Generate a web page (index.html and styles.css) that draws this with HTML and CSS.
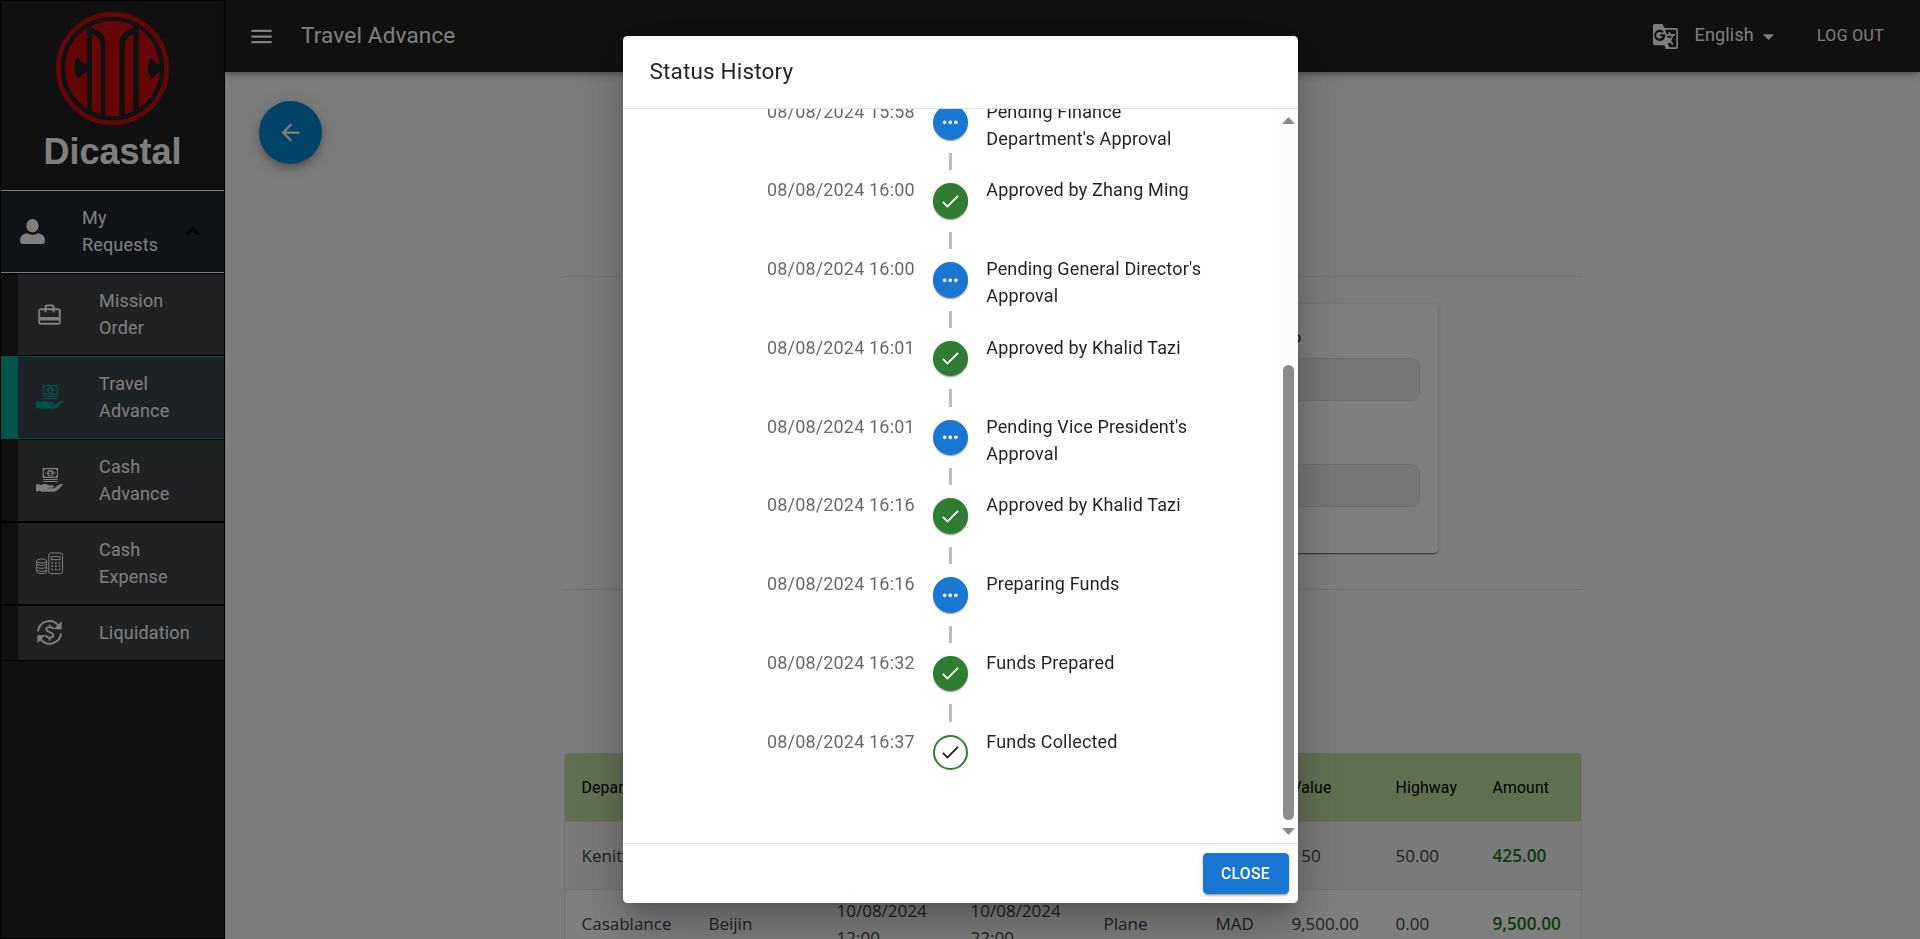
FILE: index.html
```html
<!DOCTYPE html>
<html lang="en">
<head>
<meta charset="utf-8">
<title>Travel Advance</title>
<link rel="stylesheet" href="styles.css">
</head>
<body>
<svg class="defs" width="0" height="0">
  <symbol id="check" viewBox="0 0 24 24"><path d="M9 16.17 4.83 12l-1.42 1.41L9 19 21 7l-1.41-1.41z"/></symbol>
  <symbol id="dots" viewBox="0 0 24 24"><path d="M6 10c-1.1 0-2 .9-2 2s.9 2 2 2 2-.9 2-2-.9-2-2-2m12 0c-1.1 0-2 .9-2 2s.9 2 2 2 2-.9 2-2-.9-2-2-2m-6 0c-1.1 0-2 .9-2 2s.9 2 2 2 2-.9 2-2-.9-2-2-2"/></symbol>
  <symbol id="cash-hand" viewBox="0 0 81 72">
    <path fill-rule="evenodd" d="M20 0h46v30H20zM26 4a5 5 0 0 1-3 4v14a5 5 0 0 1 3 4h34a5 5 0 0 1 3-4V8a5 5 0 0 1-3-4z"/>
    <path fill-rule="evenodd" d="M43 5a10 10 0 1 0 .1 0zM42 10h3v3h3v3h-6v2h6v3h-4v2h-3v-2h-3v-3h6v-2h-6v-4h4z"/>
    <circle cx="29" cy="15" r="2"/><circle cx="57" cy="15" r="2"/>
    <path d="M22 33h43v3H22zM22 39h43v3H22z"/>
    <path d="M0 49h10l4 3c8-6 18-4 24 0h12c5 0 5 6 0 7H35v2h17c5-1 8-5 13-8 6-4 11-5 16-5-6 10-17 22-29 23H16l-5-3-2 2H0z"/>
  </symbol>
</svg>

<div class="app">
  <aside class="sidebar">
    <div class="brand">
      <svg class="brand-logo" viewBox="168 36 340 340">
        <circle cx="338" cy="206" r="163" fill="none" stroke="#c90c10" stroke-width="14"/>
        <g fill="#c90c10">
          <path d="M262 84A144 144 0 0 0 262 327V216Q245 222 236 237Q223 229 223 205Q223 181 233 173Q244 191 262 195Z"/>
          <path d="M417 85V325A144 144 0 0 0 481 216Q466 222 458 237Q444 229 444 205Q444 181 454 173Q463 191 480 195A144 144 0 0 0 417 85Z"/>
          <path d="M276 78Q300 63 338 62Q376 63 400 78V85Q359 93 359 136V348Q338 351 317 348V136Q317 94 276 86Z"/>
          <path d="M276 102Q303 112 303 140V345L276 334Z"/>
          <path d="M401 102Q375 112 375 140V345L401 334Z"/>
        </g>
      </svg>
      <div class="brand-name">Dicastal</div>
    </div>
    <div class="nav-group">
      <svg class="nav-user" viewBox="0 0 75 75"><ellipse cx="37.500" cy="20" rx="18.500" ry="20"/><path d="M0 66C0 52 8 45 22 43Q37 52 53 43C67 45 75 52 75 66Q75 75 66 75H9Q0 75 0 66Z"/></svg>
      <span class="nav-text">My<br>Requests</span>
      <svg class="nav-chevron" viewBox="0 0 24 24"><path d="M12 8l-6 6 1.410 1.410L12 10.830l4.590 4.580L18 14z" stroke="#000" stroke-width=".5"/></svg>
    </div>
    <div class="nav-item">
      <svg class="nav-icon" viewBox="0 0 24 24"><path d="M20 6.500h-3.500V5c0-1.100-.9-2-2-2h-5c-1.100 0-2 .9-2 2v1.500H4c-1.100 0-2 .9-2 2V19c0 1.100.9 2 2 2h16c1.100 0 2-.9 2-2V8.500c0-1.100-.9-2-2-2M9.500 4.700h5v1.800h-5zM20.300 19.300H3.700v-2h16.600zm0-5H3.700V8.200h3.800V10h1.800V8.200h5.400V10h1.800V8.200h3.800z"/></svg>
      <span>Mission<br>Order</span>
    </div>
    <div class="nav-item nav-item-active">
      <svg class="nav-icon nav-icon-hand"><use href="#cash-hand"/></svg>
      <span>Travel<br>Advance</span>
    </div>
    <div class="nav-item">
      <svg class="nav-icon nav-icon-hand"><use href="#cash-hand"/></svg>
      <span>Cash<br>Advance</span>
    </div>
    <div class="nav-item">
      <svg class="nav-icon nav-icon-line" viewBox="0 0 81 81">
        <rect x="38.500" y="9" width="41" height="62" rx="6"/><rect x="46" y="20" width="26" height="9"/>
        <path d="M46 39h5m6 0h5m6 0h5M46 48h5m6 0h5m6 0h5M46 58h5m6 0h5m6 0h5" stroke-width="5"/>
        <ellipse cx="17" cy="33" rx="15" ry="6"/><path d="M2 33v7c0 8 30 8 30 0v-7M2 42v7c0 8 30 8 30 0v-7M2 51v7c0 8 30 8 30 0v-7M2 60v5c0 8 30 8 30 0v-5"/>
      </svg>
      <span>Cash<br>Expense</span>
    </div>
    <div class="nav-item">
      <svg class="nav-icon nav-icon-line" viewBox="0 0 81 81">
        <path d="M6 37C9 8 46-6 67 19M75 43C72 72 35 86 14 61" stroke-width="6"/>
        <path class="solid" d="M77 7v24H53zM4 73V49h24z"/>
        <path d="M52 30C49 22 31 22 31 31C31 42 52 36 52 49C52 58 32 59 29 49M41 17v7M41 56v9" stroke-width="5.500"/>
      </svg>
      <span>Liquidation</span>
    </div>
  </aside>

  <div class="page">
    <header class="appbar">
      <svg class="icon" viewBox="0 0 24 24"><path d="M3 18h18v-2H3zm0-5h18v-2H3zm0-7v2h18V6z"/></svg>
      <h1 class="appbar-title">Travel Advance</h1>
      <svg class="translate" viewBox="0 0 75 75">
        <path fill-rule="evenodd" d="M5 0H29L34 12H68Q75 12 75 19V68Q75 75 68 75H39L34 64H6Q0 64 0 57V6Q0 0 5 0ZM20 17A17 17 0 1 0 37 37V31H21V37H29A10 10 0 1 1 27 27L32 22A17 17 0 0 0 20 17ZM36 17L40 30H47V24H52V30H66V35H61Q59 43 54 50L62 59L58 63L50 55L44 61L49 70H67Q70 70 70 67V20Q70 17 67 17ZM42 35L44 42L47 39L51 45Q54 40 56 35Z"/>
      </svg>
      <span class="language">English</span>
      <svg class="icon caret" viewBox="0 0 24 24"><path d="m7 10 5 5 5-5z"/></svg>
      <span class="logout">LOG OUT</span>
    </header>

    <main class="content">
      <button class="fab"><svg class="icon" viewBox="0 0 24 24"><path d="M20 11H7.830l5.590-5.590L12 4l-8 8 8 8 1.410-1.410L7.830 13H20z"/></svg></button>
      <div class="container">
        <hr class="rule">
        <section class="card">
          <div class="field"><span class="field-label">To</span><div class="field-box"></div></div>
          <div class="field"><div class="field-box"></div></div>
        </section>
        <hr class="rule">
        <div class="table">
          <div class="row row-head"><span>Departure</span><span></span><span></span><span></span><span></span><span></span><span>Value</span><span>Highway</span><span>Amount</span></div>
          <div class="row row-odd"><span>Kenitra</span><span></span><span></span><span></span><span></span><span></span><span class="shift">150</span><span>50.00</span><span class="amount">425.00</span></div>
          <div class="row"><span>Casablance</span><span>Beijin</span><span>10/08/2024 12:00</span><span>10/08/2024 22:00</span><span>Plane</span><span>MAD</span><span>9,500.00</span><span>0.00</span><span class="amount">9,500.00</span></div>
        </div>
      </div>
    </main>
  </div>
</div>

<div class="backdrop">
  <div class="dialog">
    <h2 class="dialog-title">Status History</h2>
    <div class="dialog-content">
      <ul class="timeline">
        <li class="event"><time>08/08/2024 15:58</time><div class="track"><i class="dot dot-blue"><svg><use href="#dots"/></svg></i><b class="connector"></b></div><p>Pending Finance Department's Approval</p></li>
        <li class="event"><time>08/08/2024 16:00</time><div class="track"><i class="dot dot-green"><svg><use href="#check"/></svg></i><b class="connector"></b></div><p>Approved by Zhang Ming</p></li>
        <li class="event"><time>08/08/2024 16:00</time><div class="track"><i class="dot dot-blue"><svg><use href="#dots"/></svg></i><b class="connector"></b></div><p>Pending General Director's Approval</p></li>
        <li class="event"><time>08/08/2024 16:01</time><div class="track"><i class="dot dot-green"><svg><use href="#check"/></svg></i><b class="connector"></b></div><p>Approved by Khalid Tazi</p></li>
        <li class="event"><time>08/08/2024 16:01</time><div class="track"><i class="dot dot-blue"><svg><use href="#dots"/></svg></i><b class="connector"></b></div><p>Pending Vice President's Approval</p></li>
        <li class="event"><time>08/08/2024 16:16</time><div class="track"><i class="dot dot-green"><svg><use href="#check"/></svg></i><b class="connector"></b></div><p>Approved by Khalid Tazi</p></li>
        <li class="event"><time>08/08/2024 16:16</time><div class="track"><i class="dot dot-blue"><svg><use href="#dots"/></svg></i><b class="connector"></b></div><p>Preparing Funds</p></li>
        <li class="event"><time>08/08/2024 16:32</time><div class="track"><i class="dot dot-green"><svg><use href="#check"/></svg></i><b class="connector"></b></div><p>Funds Prepared</p></li>
        <li class="event"><time>08/08/2024 16:37</time><div class="track"><i class="dot dot-outlined"><svg><use href="#check"/></svg></i></div><p>Funds Collected</p></li>
      </ul>
      <div class="scrollbar">
        <svg class="scroll-arrow" viewBox="0 0 13 7"><path d="M0 7 6.500 0 13 7z"/></svg>
        <div class="scroll-thumb"></div>
        <svg class="scroll-arrow" viewBox="0 0 13 7"><path d="M0 0 6.500 7 13 0z"/></svg>
      </div>
    </div>
    <div class="dialog-actions"><button class="close">CLOSE</button></div>
  </div>
</div>
</body>
</html>
```
FILE: styles.css
```css
* { box-sizing: border-box; }
body {
  margin: 0;
  height: 939px;
  overflow: hidden;
  font: 18px/27px Roboto, sans-serif;
  letter-spacing: 0.00938em;
  color: rgba(0, 0, 0, 0.87);
  background: #fafafa;
}
.defs { display: block; }
button { border: 0; font-family: inherit; }

.app { display: flex; height: 939px; overflow: hidden; }

/* Sidebar */
.sidebar {
  width: 225px;
  flex: none;
  background: #212121;
  border: 1px solid #000;
  color: #fff;
}
.sidebar svg { fill: currentColor; }
.brand {
  height: 189px;
  display: flex;
  flex-direction: column;
  align-items: center;
  padding-top: 11px;
}
.brand-logo { width: 113px; height: 113px; flex: none; }
.brand-name {
  margin-top: 6px;
  font: bold 36px/41px "Liberation Sans", Arial, sans-serif;
  letter-spacing: 0;
}
.nav-group {
  height: 83px;
  display: flex;
  align-items: center;
  padding-left: 19px;
  border-top: 1px solid #fff;
  border-bottom: 1px solid #fff;
  background: #1e252d;
}
.nav-user { width: 25px; height: 25px; }
.nav-text { width: 97px; margin: -1px 0 0 37px; }
.nav-group .nav-chevron { width: 27px; height: 27px; fill: #000; }
.nav-item {
  display: flex;
  align-items: center;
  padding: 13px 0 14px 17px;
  border: solid #000;
  border-width: 1px 0;
  background: linear-gradient(90deg, #212121 17px, #3f4244 17px);
}
.nav-icon { width: 27px; height: 27px; margin: 0 36px 0 18px; flex: none; }
.nav-icon-hand { height: 24px; }
.sidebar .nav-icon-line { fill: none; stroke: currentColor; stroke-width: 3; }
.sidebar .solid { fill: currentColor; stroke: none; }
.nav-item-active {
  border-color: #00a896;
  background: linear-gradient(90deg, #00a896 17px, #3a444c 17px);
}
.nav-item-active .nav-icon { color: #00a896; }

/* Top bar */
.page { flex: 1; min-width: 0; }
.icon { width: 27px; height: 27px; fill: currentColor; flex: none; }
.appbar {
  position: relative;
  height: 72px;
  display: flex;
  align-items: center;
  padding: 0 36px 2px 23px;
  background: #212121;
  color: #fff;
  box-shadow: 0 2px 4px -1px rgba(0,0,0,.2), 0 4px 6px rgba(0,0,0,.14), 0 1px 11px rgba(0,0,0,.12);
}
.appbar > .icon:first-child { margin-top: 2px; }
.appbar-title { margin: 0 auto 0 26px; font-size: 22.5px; font-weight: 400; letter-spacing: 0.0075em; }
.translate { width: 25px; height: 25px; fill: #fff; margin: 3px 17px 0 0; }
.language { margin: -1px 1px 0 0; }
.caret { margin: 2px 35px 0 0; }
.logout { font-size: 15.75px; letter-spacing: 0.02857em; }

/* Page content */
.fab {
  display: grid;
  place-items: center;
  width: 63px;
  height: 63px;
  margin: 29px 0 0 34px;
  border-radius: 50%;
  background: #0288d1;
  color: #fff;
  box-shadow: 0 3px 6px -1px rgba(0,0,0,.2), 0 7px 11px rgba(0,0,0,.14), 0 1px 20px rgba(0,0,0,.12);
}
.fab .icon { width: 27px; }
.container { width: 1018px; margin: 112px auto 0; }
.rule { height: 1px; margin: 0; border: 0; background: #e0e0e0; }
.card {
  width: 731px;
  height: 249px;
  margin: 27px auto 36px;
  padding: 20px 18px;
  border-radius: 4.5px;
  background: #fff;
  box-shadow: 0 2px 1px -1px rgba(0,0,0,.4), 0 1px 1px rgba(0,0,0,.2), 0 1px 4px rgba(0,0,0,.16);
}
.field-label { display: block; height: 34px; padding-left: 558px; font-size: 16px; color: #000; }
.field-box { height: 43px; border: 1px solid #dfdfdf; border-radius: 9px; background: #efefef; }
.field + .field { margin-top: 63px; }
.table {
  margin-top: 163px;
  border: 1px solid #e0e0e0;
  border-top: 0;
  border-radius: 4.5px 4.5px 0 0;
  background: #fff;
  overflow: hidden;
}
.row {
  display: grid;
  grid-template-columns: 127px 128px 134px 133px 112px 76px 104px 97px 90px;
  align-items: center;
  height: 68px;
  padding-left: 17px;
  border-bottom: 1px solid #e0e0e0;
  font-family: "Open Sans", sans-serif;
  font-size: 17px;
  letter-spacing: 0;
  color: #3f4244;
}
.row span { padding-right: 25px; }
.row-head {
  height: 69px;
  background: #c5e1a5;
  color: #000;
  font-family: Roboto, sans-serif;
  font-size: 15.75px;
  letter-spacing: 0.01071em;
  white-space: nowrap;
}
.row-odd { background: #f5f5f5; }
.row .amount { padding: 0; color: #1b7a1f; font-weight: 600; font-size: 17.2px; }

/* Dialog */
.backdrop {
  position: fixed;
  inset: 0;
  display: flex;
  justify-content: center;
  padding: 36px 0;
  background: rgba(0, 0, 0, 0.5);
}
.dialog {
  width: 675px;
  display: flex;
  flex-direction: column;
  border-radius: 4.5px;
  background: #fff;
  box-shadow: 0 12px 17px -8px rgba(0,0,0,.2), 0 27px 43px 3px rgba(0,0,0,.14), 0 10px 52px 9px rgba(0,0,0,.12);
}
.dialog-title {
  margin: 0;
  padding: 17px 27px 19px;
  font-size: 22.5px;
  line-height: 36px;
  font-weight: 400;
  letter-spacing: 0.0075em;
}
.dialog-content {
  flex: 1;
  min-height: 0;
  display: flex;
  overflow: hidden;
  border: solid rgba(0, 0, 0, 0.12);
  border-width: 1px 0;
}
.timeline { flex: 1; margin: -17.5px 0 0; padding: 0 45px; list-style: none; }
.event { display: flex; min-height: 78.75px; }
.event time, .event p { flex: 1; margin: 0; padding: 6.2px 18px; }
.event time { text-align: right; color: rgba(0, 0, 0, 0.6); }
.track { display: flex; flex-direction: column; align-items: center; }
.dot {
  display: flex;
  margin: 13px 0;
  padding: 4.5px;
  border: 2px solid transparent;
  border-radius: 50%;
  box-shadow: 0 2px 1px -1px rgba(0,0,0,.2), 0 1px 1px rgba(0,0,0,.14), 0 1px 3px rgba(0,0,0,.12);
}
.dot svg { width: 22.5px; height: 22.5px; fill: currentColor; }
.dot-blue { background: #1976d2; border-color: #1976d2; color: #fff; }
.dot-green { background: #2e7d32; border-color: #2e7d32; color: #fff; }
.dot-outlined { border-color: #2e7d32; box-shadow: none; }
.connector { flex: 1; width: 3px; background: #bdbdbd; }
.scrollbar {
  width: 19px;
  display: flex;
  flex-direction: column;
  align-items: center;
  padding: 8px 0;
  background: #fcfcfc;
}
.scroll-arrow { width: 13px; height: 7px; fill: #8b8b8b; }
.scroll-thumb { width: 11px; height: 455px; margin: auto 0 8px; border-radius: 6px; background: #8b8b8b; }
.dialog-actions { display: flex; justify-content: flex-end; padding: 9px; }
.close {
  width: 86px;
  height: 41px;
  border-radius: 4.5px;
  background: #1976d2;
  color: #fff;
  font-size: 15.75px;
  font-weight: 500;
  letter-spacing: 0.02em;
  box-shadow: 0 3px 1px -2px rgba(0,0,0,.2), 0 2px 2px rgba(0,0,0,.14), 0 1px 6px rgba(0,0,0,.12);
}
```
